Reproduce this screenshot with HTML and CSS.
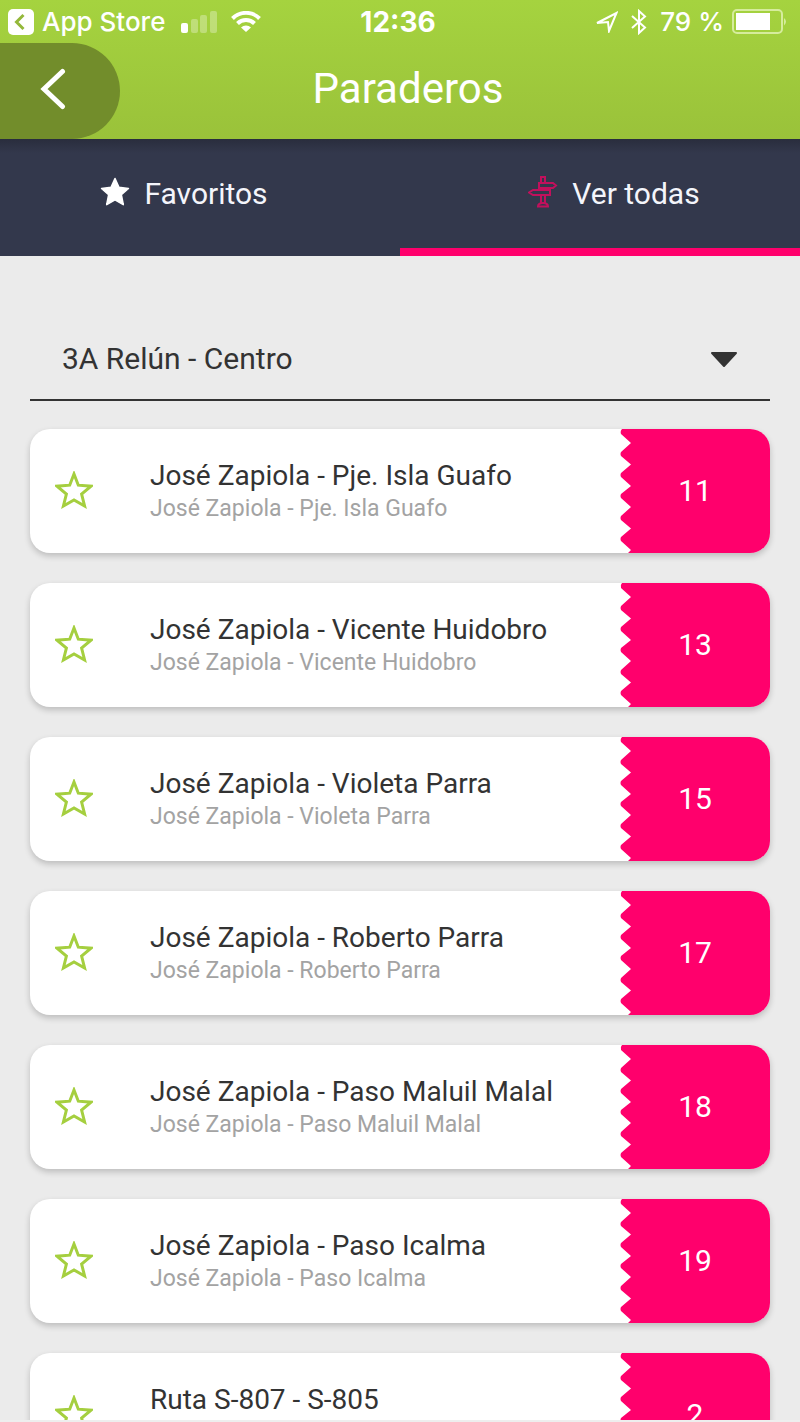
FILE: index.html
```html
<!DOCTYPE html>
<html lang="es">
<head>
	<meta charset="UTF-8">
	<meta name="viewport" content="width=device-width, initial-scale=1.0">
	<title>Paraderos</title>
	<link rel="stylesheet" href="styles.css">
</head>
<body>

<!-- Shared shapes -->
<svg class="sprite" aria-hidden="true">
	<symbol id="star" viewBox="0 0 38 38">
		<path d="M19 3 L23.3 14.2 L36 15.2 L26.6 23 L29.6 35 L19 29 L8.4 35 L11.4 23 L2 15.2 L14.7 14.2 Z"/>
	</symbol>
	<symbol id="teeth" viewBox="0 0 12 124" preserveAspectRatio="none">
		<path d="M12 0 H2 Q0 2 1 5 L11 14 L1 23 Q0 25 1 27 L11 35.500 L1 44 Q0 46 1 48 L11 57 L1 65 Q0 67 1 69 L11 78 L1 87 Q0 89 1 91 L11 99.500 L1 108 Q0 110 1 112 L11 121 L8 124 H12 Z"/>
	</symbol>
</svg>

<div class="app">

	<header class="header">
		<div class="status-bar">
			<div class="status-left">
				<svg width="26" height="26" viewBox="0 0 26 26">
					<rect width="26" height="26" rx="5" fill="#fff"/>
					<path d="M15.500 6 L8.500 13 L15.500 20" fill="none" stroke="#94b83a" stroke-width="3"/>
				</svg>
				<span class="status-app">App Store</span>
				<svg class="signal" width="36" height="22" viewBox="0 0 36 22" fill="#fff">
					<rect x="0" y="12" width="7" height="10" rx="2"/>
					<g opacity="0.300">
						<rect x="10" y="8" width="7" height="14" rx="2"/>
						<rect x="19" y="4" width="7" height="18" rx="2"/>
						<rect x="29" y="0" width="7" height="22" rx="2"/>
					</g>
				</svg>
				<svg width="30" height="22" viewBox="0 0 30 22">
					<path d="M1.500 7.500 A19 19 0 0 1 28.500 7.500" fill="none" stroke="#fff" stroke-width="4"/>
					<path d="M6.500 12.500 A12 12 0 0 1 23.500 12.500" fill="none" stroke="#fff" stroke-width="4"/>
					<path d="M15 21 L10 16.500 A7.500 7.500 0 0 1 20 16.500 Z" fill="#fff"/>
				</svg>
			</div>
			<time class="status-time">12:36</time>
			<div class="status-right">
				<svg width="22" height="22" viewBox="0 0 22 22">
					<path d="M1 12 L20.500 2 L13 20 L12 11 Z" fill="none" stroke="#fff" stroke-width="2"/>
				</svg>
				<svg class="bluetooth" width="18" height="26" viewBox="0 0 18 26">
					<path d="M2 7 L15 18.500 L9 24 V2 L15 7.500 L2 19" fill="none" stroke="#fff" stroke-width="2"/>
				</svg>
				<span>79 %</span>
				<svg width="56" height="26" viewBox="0 0 56 26">
					<rect x="1" y="1" width="49" height="23" rx="4" fill="none" stroke="#d6ec9d" stroke-width="2"/>
					<rect x="4" y="4" width="34" height="17" fill="#fff"/>
					<path d="M52 9 Q56 12.500 52 16.500 Z" fill="#d6ec9d"/>
				</svg>
			</div>
		</div>
		<div class="title-bar">
			<button class="back-btn" type="button" aria-label="Volver">
				<svg width="26" height="42" viewBox="0 0 26 42">
					<path d="M22.500 3.500 L4 21 L22.500 38.500" fill="none" stroke="#fff" stroke-width="5" stroke-linecap="round"/>
				</svg>
			</button>
			<h1 class="title">Paraderos</h1>
		</div>
	</header>

	<nav class="tabs">
		<a class="tab" href="#favoritos">
			<svg class="tab-icon tab-star" width="30" height="30" viewBox="0 0 38 38">
				<path d="M19 2 L24 13 L36 14.500 L27 22.500 L29.500 35 L19 29 L8.500 35 L11 22.500 L2 14.500 L14 13 Z"/>
			</svg>
			<span>Favoritos</span>
		</a>
		<a class="tab active" href="#todas">
			<svg class="tab-icon" width="30" height="34" viewBox="0 0 30 34" fill="none" stroke="#c2105c" stroke-width="2">
				<path d="M13 8 V2 H17 V8 M17 14 V15 M13 20 V28 M17 20 V28"/>
				<path d="M11 8 H25 L28 10.500 L25 13 H11 Z"/>
				<path d="M22 15 H5 L1 17.500 L5 20 H22 Z"/>
				<path d="M10 31.500 Q10 28 15 28 Q20 28 20 31.500 Z"/>
			</svg>
			<span>Ver todas</span>
		</a>
	</nav>

	<main class="content">
		<div class="route">
			<select class="route-select" aria-label="Recorrido">
				<option>3A Relún - Centro</option>
			</select>
			<svg class="route-arrow" width="28" height="16" viewBox="0 0 28 16">
				<path d="M2 1 H26 L14 14 Z" fill="#333" stroke="#333" stroke-width="2" stroke-linejoin="round"/>
			</svg>
		</div>

		<ul class="stops">
			<li class="stop">
				<button class="fav-btn" type="button" aria-label="Agregar a favoritos"><svg width="38" height="38"><use href="#star"/></svg></button>
				<div class="stop-text">
					<h2 class="stop-name">José Zapiola - Pje. Isla Guafo</h2>
					<p class="stop-address">José Zapiola - Pje. Isla Guafo</p>
				</div>
				<svg class="teeth"><use href="#teeth"/></svg>
				<span class="stop-number">11</span>
			</li>
			<li class="stop">
				<button class="fav-btn" type="button" aria-label="Agregar a favoritos"><svg width="38" height="38"><use href="#star"/></svg></button>
				<div class="stop-text">
					<h2 class="stop-name">José Zapiola - Vicente Huidobro</h2>
					<p class="stop-address">José Zapiola - Vicente Huidobro</p>
				</div>
				<svg class="teeth"><use href="#teeth"/></svg>
				<span class="stop-number">13</span>
			</li>
			<li class="stop">
				<button class="fav-btn" type="button" aria-label="Agregar a favoritos"><svg width="38" height="38"><use href="#star"/></svg></button>
				<div class="stop-text">
					<h2 class="stop-name">José Zapiola - Violeta Parra</h2>
					<p class="stop-address">José Zapiola - Violeta Parra</p>
				</div>
				<svg class="teeth"><use href="#teeth"/></svg>
				<span class="stop-number">15</span>
			</li>
			<li class="stop">
				<button class="fav-btn" type="button" aria-label="Agregar a favoritos"><svg width="38" height="38"><use href="#star"/></svg></button>
				<div class="stop-text">
					<h2 class="stop-name">José Zapiola - Roberto Parra</h2>
					<p class="stop-address">José Zapiola - Roberto Parra</p>
				</div>
				<svg class="teeth"><use href="#teeth"/></svg>
				<span class="stop-number">17</span>
			</li>
			<li class="stop">
				<button class="fav-btn" type="button" aria-label="Agregar a favoritos"><svg width="38" height="38"><use href="#star"/></svg></button>
				<div class="stop-text">
					<h2 class="stop-name">José Zapiola - Paso Maluil Malal</h2>
					<p class="stop-address">José Zapiola - Paso Maluil Malal</p>
				</div>
				<svg class="teeth"><use href="#teeth"/></svg>
				<span class="stop-number">18</span>
			</li>
			<li class="stop">
				<button class="fav-btn" type="button" aria-label="Agregar a favoritos"><svg width="38" height="38"><use href="#star"/></svg></button>
				<div class="stop-text">
					<h2 class="stop-name">José Zapiola - Paso Icalma</h2>
					<p class="stop-address">José Zapiola - Paso Icalma</p>
				</div>
				<svg class="teeth"><use href="#teeth"/></svg>
				<span class="stop-number">19</span>
			</li>
			<li class="stop">
				<button class="fav-btn" type="button" aria-label="Agregar a favoritos"><svg width="38" height="38"><use href="#star"/></svg></button>
				<div class="stop-text">
					<h2 class="stop-name">Ruta S-807 - S-805</h2>
				</div>
				<svg class="teeth"><use href="#teeth"/></svg>
				<span class="stop-number">2</span>
			</li>
		</ul>
	</main>

</div>

</body>
</html>
```
FILE: styles.css
```css
* {
	box-sizing: border-box;
}

body {
	margin: 0;
	background-color: #ebebeb;
	color: #333;
	font-family: Roboto, "Liberation Sans", sans-serif;
}

.sprite {
	position: absolute;
	width: 0;
	height: 0;
}

.app {
	display: flex;
	flex-direction: column;
	height: 100vh;
	border-bottom: 2px solid #eee;
}

/* Header */
.header {
	flex: none;
	background: linear-gradient(#a5d33f, #9ac23a);
	color: #fff;
}

.status-bar {
	display: grid;
	grid-template-columns: 1fr auto 1fr;
	align-items: center;
	height: 43px;
	padding: 0 12px 0 8px;
	font-family: Inter, "Liberation Sans", sans-serif;
	font-size: 26px;
	font-weight: 500;
}

.status-left,
.status-right {
	display: flex;
	align-items: center;
	gap: 8px;
}

.status-right {
	justify-content: flex-end;
}

.signal {
	margin: 0 6px 0 8px;
}

.bluetooth {
	margin: 0 4px;
}

.status-time {
	font-size: 28px;
	font-weight: 700;
}

.title-bar {
	display: grid;
	grid-template-columns: 120px 1fr 104px;
	align-items: center;
	height: 96px;
}

.back-btn {
	height: 96px;
	padding: 0 14px 4px 0;
	border: none;
	border-radius: 0 48px 48px 0;
	background-color: #728d2b;
	cursor: pointer;
}

.back-btn svg {
	display: block;
	margin: 0 auto;
}

.title {
	margin: 0;
	padding-bottom: 6px;
	font-size: 42px;
	font-weight: 400;
	text-align: center;
}

/* Tabs */
.tabs {
	display: flex;
	flex: none;
	height: 117px;
	background: linear-gradient(#292d3d, #33384c 14px);
}

.tab {
	display: flex;
	width: 50%;
	align-items: center;
	justify-content: center;
	gap: 14px;
	padding: 0 32px 0 0;
	border-bottom: 8px solid transparent;
	color: #f4f5fb;
	font-size: 30px;
	text-decoration: none;
}

.tab.active {
	padding: 0 0 0 28px;
	border-bottom-color: #ff006c;
}

.tab-icon {
	margin-bottom: 4px;
}

.tab-star {
	fill: #fff;
	stroke: #fff;
	stroke-width: 2px;
	stroke-linejoin: round;
}

/* List */
.content {
	flex: 1;
	min-height: 0;
	padding: 62px 30px 0;
	overflow: hidden;
}

.route {
	position: relative;
	margin-bottom: 28px;
	border-bottom: 2px solid #333;
}

.route-select {
	display: block;
	width: 100%;
	height: 81px;
	padding: 0 80px 0 32px;
	border: none;
	background: none;
	color: #333;
	font-family: inherit;
	font-size: 30px;
	appearance: none;
}

/* Sits over the right end of the drop-down */
.route-arrow {
	position: absolute;
	top: 34px;
	right: 32px;
	pointer-events: none;
}

.stops {
	display: flex;
	flex-direction: column;
	gap: 30px;
	margin: 0;
	padding: 0;
	list-style: none;
}

.stop {
	display: flex;
	min-height: 124px;
	border-radius: 20px;
	background-color: #fff;
	box-shadow: 0 3px 6px rgba(0, 0, 0, 0.2);
	overflow: hidden;
}

.fav-btn {
	flex: none;
	width: 120px;
	padding: 0 0 2px 25px;
	border: none;
	background: none;
	text-align: left;
	cursor: pointer;
}

.fav-btn svg {
	display: block;
	fill: none;
	stroke: #a5cf3f;
	stroke-width: 3px;
}

.stop-text {
	flex: 1;
	padding-top: 30px;
}

.stop-name {
	margin: 0;
	font-size: 28px;
	font-weight: 400;
	line-height: 34px;
}

.stop-address {
	margin: 0;
	color: #a3a3a3;
	font-size: 23px;
	line-height: 32px;
}

.teeth {
	flex: none;
	width: 12px;
	height: 124px;
	fill: #ff006c;
}

.stop-number {
	display: flex;
	flex: none;
	align-items: center;
	justify-content: center;
	width: 138px;
	padding: 0 12px 2px 0;
	background-color: #ff006c;
	color: #fff;
	font-size: 30px;
}
```
